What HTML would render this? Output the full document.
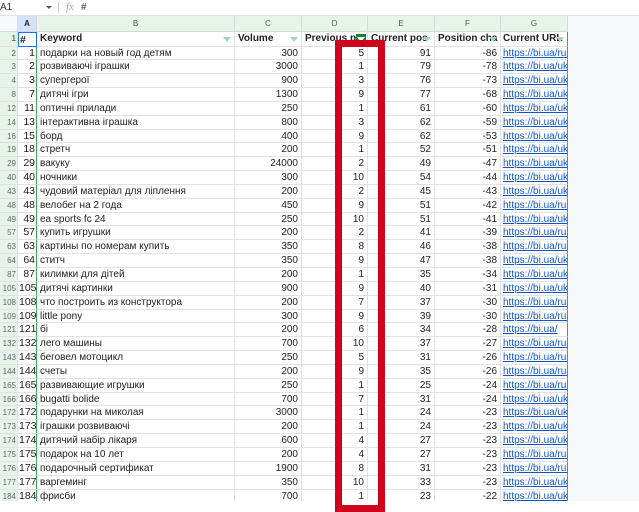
<!DOCTYPE html>
<html><head><meta charset="utf-8"><style>
*{box-sizing:border-box;margin:0;padding:0}
body{width:639px;height:512px;overflow:hidden;background:#fff;font-family:"Liberation Sans",Arial,sans-serif;font-size:10px;color:#222;position:relative}
#fb{position:absolute;left:0;top:0;width:639px;height:16px;background:#fff;border-bottom:1px solid #e0e0e0}
#fb .nm{position:absolute;left:0;top:2px;font-size:10px;color:#333}
#fb .ar{position:absolute;left:46px;top:6px;width:0;height:0;border-left:3px solid transparent;border-right:3px solid transparent;border-top:3px solid #555}
#fb .sep{position:absolute;left:58px;top:2px;width:1px;height:11px;background:#ccc}
#fb .fx{position:absolute;left:66px;top:1px;font-style:italic;color:#aaa;font-family:"Liberation Serif",serif;font-size:11px}
#fb .v{position:absolute;left:81px;top:2px;color:#333}
#grid{position:absolute;left:0;top:16px;width:568px;height:485px;overflow:hidden}
.r{display:flex;height:13.85px;line-height:13.4px;white-space:nowrap}
.c{border-right:1px solid #e2e2e2;border-bottom:1px solid #e2e2e2;overflow:hidden;padding:0 3px;flex:none}
.n{width:18px;background:#e6f4ea;color:#666;font-size:8px;text-align:right;padding:0 1px;direction:rtl}
.a{width:19px;text-align:right;font-size:10.5px;border-right:1px solid #34a853;padding:0 1px}
.b{width:198px}
.w{width:67px;text-align:right}
.d{width:66px;text-align:right}
.g{width:67px;border-right:1px solid #34a853;padding:0 2px}
.g span{color:#1155cc;text-decoration:underline}
.hd{height:16px;line-height:16px}
.hd .c{background:#e6f4ea;color:#555;font-size:8px;text-align:center;border-color:#d8d8d8}
.hd .n{background:#f8f9fa}
.hd .a{background:#d3e3fd;color:#222;font-weight:bold;text-align:center}
.h1{font-weight:bold;height:14.5px;line-height:14px}
.h1 .c{position:relative}
.h1 .a{text-align:left;border:1.5px solid #1a73e8}
.fi{position:absolute;right:3px;top:5px;width:0;height:0;border-left:4px solid transparent;border-right:4px solid transparent;border-top:5px solid #a8d5b5}
.fia{position:absolute;right:1px;top:2px;width:10px;height:10px;background:#188038}
.fia:after{content:"";position:absolute;left:1px;top:3px;border-left:4px solid transparent;border-right:4px solid transparent;border-top:5px solid #fff}
#right{position:absolute;left:568px;top:16px;width:71px;height:485px;background:#f8f9fa}
#box{position:absolute;left:335px;top:40px;width:50px;height:472px;border:7px solid #d0021b}
</style></head><body>
<div id="fb"><span class="nm">A1</span><span class="ar"></span><span class="sep"></span><span class="fx">fx</span><span class="v">#</span></div>
<div id="right"></div>
<div id="grid">
<div class="r hd"><div class="c n"></div><div class="c a">A</div><div class="c b">B</div><div class="c w" style="text-align:center">C</div><div class="c d" style="text-align:center">D</div><div class="c w" style="text-align:center">E</div><div class="c d" style="text-align:center">F</div><div class="c g" style="color:#555">G</div></div>
<div class="r h1"><div class="c n">1</div><div class="c a">#</div><div class="c b">Keyword<i class="fi"></i></div><div class="c w" style="text-align:left">Volume<i class="fi"></i></div><div class="c d" style="text-align:left">Previous po<i class="fia"></i></div><div class="c w" style="text-align:left">Current pos<i class="fi"></i></div><div class="c d" style="text-align:left">Position cha<i class="fi"></i></div><div class="c g">Current URL<i class="fi"></i></div></div>
<div class="r"><div class="c n">2</div><div class="c a">1</div><div class="c b">подарки на новый год детям</div><div class="c w">300</div><div class="c d">5</div><div class="c w">91</div><div class="c d">-86</div><div class="c g"><span>https://bi.ua/rus/</span></div></div>
<div class="r"><div class="c n">3</div><div class="c a">2</div><div class="c b">розвиваючі іграшки</div><div class="c w">3000</div><div class="c d">1</div><div class="c w">79</div><div class="c d">-78</div><div class="c g"><span>https://bi.ua/ukr/</span></div></div>
<div class="r"><div class="c n">4</div><div class="c a">3</div><div class="c b">супергерої</div><div class="c w">900</div><div class="c d">3</div><div class="c w">76</div><div class="c d">-73</div><div class="c g"><span>https://bi.ua/ukr/</span></div></div>
<div class="r"><div class="c n">8</div><div class="c a">7</div><div class="c b">дитячі ігри</div><div class="c w">1300</div><div class="c d">9</div><div class="c w">77</div><div class="c d">-68</div><div class="c g"><span>https://bi.ua/ukr/</span></div></div>
<div class="r"><div class="c n">12</div><div class="c a">11</div><div class="c b">оптичні прилади</div><div class="c w">250</div><div class="c d">1</div><div class="c w">61</div><div class="c d">-60</div><div class="c g"><span>https://bi.ua/ukr/</span></div></div>
<div class="r"><div class="c n">14</div><div class="c a">13</div><div class="c b">інтерактивна іграшка</div><div class="c w">800</div><div class="c d">3</div><div class="c w">62</div><div class="c d">-59</div><div class="c g"><span>https://bi.ua/ukr/</span></div></div>
<div class="r"><div class="c n">16</div><div class="c a">15</div><div class="c b">борд</div><div class="c w">400</div><div class="c d">9</div><div class="c w">62</div><div class="c d">-53</div><div class="c g"><span>https://bi.ua/ukr/</span></div></div>
<div class="r"><div class="c n">19</div><div class="c a">18</div><div class="c b">стретч</div><div class="c w">200</div><div class="c d">1</div><div class="c w">52</div><div class="c d">-51</div><div class="c g"><span>https://bi.ua/ukr/</span></div></div>
<div class="r"><div class="c n">29</div><div class="c a">29</div><div class="c b">вакуку</div><div class="c w">24000</div><div class="c d">2</div><div class="c w">49</div><div class="c d">-47</div><div class="c g"><span>https://bi.ua/ukr/</span></div></div>
<div class="r"><div class="c n">40</div><div class="c a">40</div><div class="c b">ночники</div><div class="c w">300</div><div class="c d">10</div><div class="c w">54</div><div class="c d">-44</div><div class="c g"><span>https://bi.ua/ukr/</span></div></div>
<div class="r"><div class="c n">43</div><div class="c a">43</div><div class="c b">чудовий матеріал для ліплення</div><div class="c w">200</div><div class="c d">2</div><div class="c w">45</div><div class="c d">-43</div><div class="c g"><span>https://bi.ua/ukr/</span></div></div>
<div class="r"><div class="c n">48</div><div class="c a">48</div><div class="c b">велобег на 2 года</div><div class="c w">450</div><div class="c d">9</div><div class="c w">51</div><div class="c d">-42</div><div class="c g"><span>https://bi.ua/rus/</span></div></div>
<div class="r"><div class="c n">49</div><div class="c a">49</div><div class="c b">ea sports fc 24</div><div class="c w">250</div><div class="c d">10</div><div class="c w">51</div><div class="c d">-41</div><div class="c g"><span>https://bi.ua/ukr/</span></div></div>
<div class="r"><div class="c n">57</div><div class="c a">57</div><div class="c b">купить игрушки</div><div class="c w">200</div><div class="c d">2</div><div class="c w">41</div><div class="c d">-39</div><div class="c g"><span>https://bi.ua/rus/</span></div></div>
<div class="r"><div class="c n">63</div><div class="c a">63</div><div class="c b">картины по номерам купить</div><div class="c w">350</div><div class="c d">8</div><div class="c w">46</div><div class="c d">-38</div><div class="c g"><span>https://bi.ua/rus/</span></div></div>
<div class="r"><div class="c n">64</div><div class="c a">64</div><div class="c b">ститч</div><div class="c w">350</div><div class="c d">9</div><div class="c w">47</div><div class="c d">-38</div><div class="c g"><span>https://bi.ua/ukr/</span></div></div>
<div class="r"><div class="c n">87</div><div class="c a">87</div><div class="c b">килимки для дітей</div><div class="c w">200</div><div class="c d">1</div><div class="c w">35</div><div class="c d">-34</div><div class="c g"><span>https://bi.ua/ukr/</span></div></div>
<div class="r"><div class="c n">105</div><div class="c a">105</div><div class="c b">дитячі картинки</div><div class="c w">900</div><div class="c d">9</div><div class="c w">40</div><div class="c d">-31</div><div class="c g"><span>https://bi.ua/ukr/</span></div></div>
<div class="r"><div class="c n">108</div><div class="c a">108</div><div class="c b">что построить из конструктора</div><div class="c w">200</div><div class="c d">7</div><div class="c w">37</div><div class="c d">-30</div><div class="c g"><span>https://bi.ua/rus/</span></div></div>
<div class="r"><div class="c n">109</div><div class="c a">109</div><div class="c b">little pony</div><div class="c w">300</div><div class="c d">9</div><div class="c w">39</div><div class="c d">-30</div><div class="c g"><span>https://bi.ua/rus/</span></div></div>
<div class="r"><div class="c n">121</div><div class="c a">121</div><div class="c b">бі</div><div class="c w">200</div><div class="c d">6</div><div class="c w">34</div><div class="c d">-28</div><div class="c g"><span>https://bi.ua/</span></div></div>
<div class="r"><div class="c n">132</div><div class="c a">132</div><div class="c b">лего машины</div><div class="c w">700</div><div class="c d">10</div><div class="c w">37</div><div class="c d">-27</div><div class="c g"><span>https://bi.ua/rus/</span></div></div>
<div class="r"><div class="c n">143</div><div class="c a">143</div><div class="c b">беговел мотоцикл</div><div class="c w">250</div><div class="c d">5</div><div class="c w">31</div><div class="c d">-26</div><div class="c g"><span>https://bi.ua/rus/</span></div></div>
<div class="r"><div class="c n">144</div><div class="c a">144</div><div class="c b">счеты</div><div class="c w">200</div><div class="c d">9</div><div class="c w">35</div><div class="c d">-26</div><div class="c g"><span>https://bi.ua/rus/</span></div></div>
<div class="r"><div class="c n">165</div><div class="c a">165</div><div class="c b">развивающие игрушки</div><div class="c w">250</div><div class="c d">1</div><div class="c w">25</div><div class="c d">-24</div><div class="c g"><span>https://bi.ua/rus/</span></div></div>
<div class="r"><div class="c n">166</div><div class="c a">166</div><div class="c b">bugatti bolide</div><div class="c w">700</div><div class="c d">7</div><div class="c w">31</div><div class="c d">-24</div><div class="c g"><span>https://bi.ua/ukr/</span></div></div>
<div class="r"><div class="c n">172</div><div class="c a">172</div><div class="c b">подарунки на миколая</div><div class="c w">3000</div><div class="c d">1</div><div class="c w">24</div><div class="c d">-23</div><div class="c g"><span>https://bi.ua/ukr/</span></div></div>
<div class="r"><div class="c n">173</div><div class="c a">173</div><div class="c b">іграшки розвиваючі</div><div class="c w">200</div><div class="c d">1</div><div class="c w">24</div><div class="c d">-23</div><div class="c g"><span>https://bi.ua/ukr/</span></div></div>
<div class="r"><div class="c n">174</div><div class="c a">174</div><div class="c b">дитячий набір лікаря</div><div class="c w">600</div><div class="c d">4</div><div class="c w">27</div><div class="c d">-23</div><div class="c g"><span>https://bi.ua/ukr/</span></div></div>
<div class="r"><div class="c n">175</div><div class="c a">175</div><div class="c b">подарок на 10 лет</div><div class="c w">200</div><div class="c d">4</div><div class="c w">27</div><div class="c d">-23</div><div class="c g"><span>https://bi.ua/rus/</span></div></div>
<div class="r"><div class="c n">176</div><div class="c a">176</div><div class="c b">подарочный сертификат</div><div class="c w">1900</div><div class="c d">8</div><div class="c w">31</div><div class="c d">-23</div><div class="c g"><span>https://bi.ua/rus/</span></div></div>
<div class="r"><div class="c n">177</div><div class="c a">177</div><div class="c b">варгеминг</div><div class="c w">350</div><div class="c d">10</div><div class="c w">33</div><div class="c d">-23</div><div class="c g"><span>https://bi.ua/ukr/</span></div></div>
<div class="r"><div class="c n">184</div><div class="c a">184</div><div class="c b">фрисби</div><div class="c w">700</div><div class="c d">1</div><div class="c w">23</div><div class="c d">-22</div><div class="c g"><span>https://bi.ua/ukr/</span></div></div>
</div>
<div id="box"></div>
</body></html>
